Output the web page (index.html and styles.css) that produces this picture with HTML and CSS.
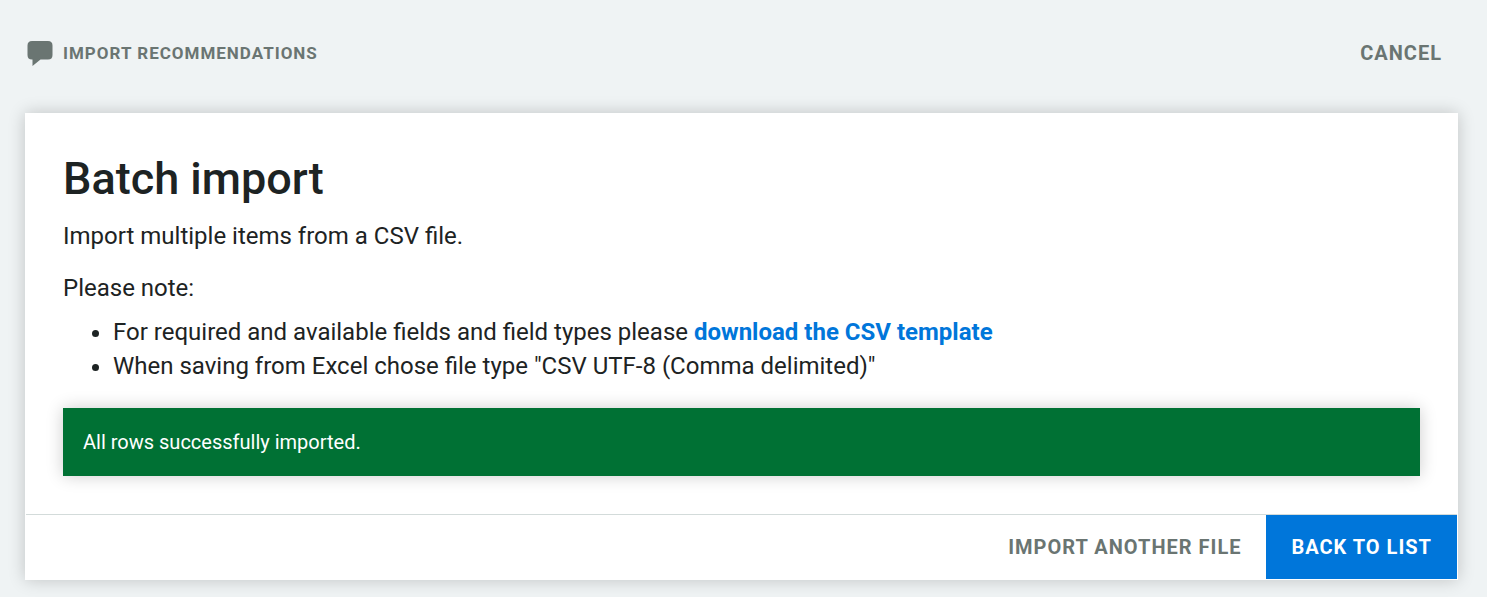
FILE: index.html
```html
<!DOCTYPE html>
<html lang="en">
<head>
<meta charset="utf-8">
<meta name="viewport" content="width=device-width, initial-scale=1">
<title>Batch import</title>
<link rel="stylesheet" href="styles.css">
</head>
<body>
<header class="topbar">
  <div class="topbar-title">
    <svg class="topbar-icon" viewBox="0 0 26 28" aria-hidden="true"><path d="M5 2H21Q25.500 2 25.500 6.500V16Q25.500 20.500 21 20.500H13.500L5.500 27V20.500H5Q0.500 20.500 0.500 16V6.500Q0.500 2 5 2Z"/></svg>
    <span>IMPORT RECOMMENDATIONS</span>
  </div>
  <button class="button" type="button">CANCEL</button>
</header>
<main class="card">
  <div class="card-body">
    <h1 class="title">Batch import</h1>
    <p class="text">Import multiple items from a CSV file.</p>
    <p class="text">Please note:</p>
    <ul class="notes">
      <li>For required and available fields and field types please <a class="link" href="#template">download the CSV template</a></li>
      <li>When saving from Excel chose file type "CSV UTF-8 (Comma delimited)"</li>
    </ul>
    <div class="alert" role="status">All rows successfully imported.</div>
  </div>
  <footer class="card-footer">
    <button class="button" type="button">IMPORT ANOTHER FILE</button>
    <button class="button button-primary" type="button">BACK TO LIST</button>
  </footer>
</main>
</body>
</html>
```
FILE: styles.css
```css
* {
  box-sizing: border-box;
}

body {
  margin: 0;
  background: #eff3f4;
  color: #1d2323;
  font-family: Roboto, "Liberation Sans", sans-serif;
  font-size: 24px;
  line-height: 34px;
}

.topbar {
  display: flex;
  align-items: center;
  justify-content: space-between;
  padding: 21px 20px 28px 27px;
}

.topbar-title {
  display: flex;
  align-items: center;
  gap: 10px;
  color: #6a7572;
  font-size: 17px;
  font-weight: 700;
  letter-spacing: 1px;
}

.topbar-icon {
  width: 26px;
  height: 28px;
  fill: currentColor;
}

.card {
  margin: 0 29px 17px 25px;
  border: 1px solid #fff;
  background: #fff;
  box-shadow: 0 0 16px rgba(0, 0, 0, 0.2);
}

.card-body {
  padding: 35px 37px 38px;
}

.title {
  margin: 0 0 10px;
  font-size: 45px;
  font-weight: 500;
  line-height: 60px;
}

.text {
  margin: 0 0 18px;
}

.text + .notes {
  margin-top: -8px;
}

.notes {
  margin-bottom: 25px;
  padding-left: 50px;
}

.link {
  color: #0076da;
  font-weight: 700;
  text-decoration: none;
}

.alert {
  padding: 17px 20px;
  background: #007134;
  box-shadow: 0 0 16px rgba(0, 0, 0, 0.2);
  color: #fff;
  font-size: 20px;
}

.card-footer {
  display: flex;
  justify-content: flex-end;
  border-top: 1px solid #d3dbda;
}

.button {
  padding: 0 25px;
  border: 0;
  background: transparent;
  color: #6a7572;
  font-family: inherit;
  font-size: 20px;
  font-weight: 700;
  letter-spacing: 1px;
  line-height: 64px;
  cursor: pointer;
}

.button-primary {
  background: #0076da;
  color: #fff;
}
```
